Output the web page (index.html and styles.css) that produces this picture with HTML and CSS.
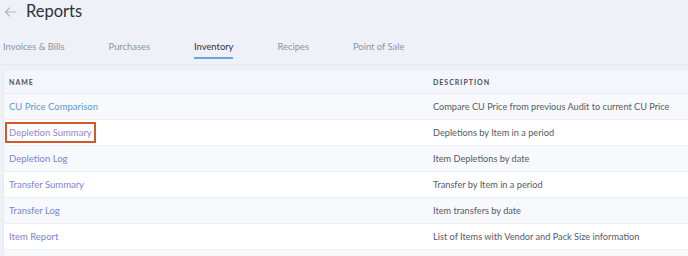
FILE: index.html
```html
<!DOCTYPE html>
<html>
<head>
<meta charset="utf-8">
<link rel="stylesheet" href="styles.css">
</head>
<body>
<header class="top">
  <svg class="back" width="13" height="10" viewBox="0 0 13 10"><path d="M12 5H1.5M5.5 1L1.5 5L5.5 9" fill="none" stroke="#b4b8c4" stroke-width="1.2" stroke-linecap="round" stroke-linejoin="round"/></svg>
  <h1 class="title">Reports</h1>
</header>
<nav class="tabs">
  <a class="tab">Invoices &amp; Bills</a>
  <a class="tab">Purchases</a>
  <a class="tab active">Inventory</a>
  <a class="tab">Recipes</a>
  <a class="tab">Point of Sale</a>
</nav>
<table class="reports">
  <thead>
    <tr><th class="col-name">NAME</th><th>DESCRIPTION</th></tr>
  </thead>
  <tbody>
    <tr><td><a class="link blue">CU Price Comparison</a></td><td>Compare CU Price from previous Audit to current CU Price</td></tr>
    <tr><td><a class="link boxed">Depletion Summary</a></td><td>Depletions by Item in a period</td></tr>
    <tr><td><a class="link">Depletion Log</a></td><td>Item Depletions by date</td></tr>
    <tr><td><a class="link">Transfer Summary</a></td><td>Transfer by Item in a period</td></tr>
    <tr><td><a class="link">Transfer Log</a></td><td>Item transfers by date</td></tr>
    <tr><td><a class="link">Item Report</a></td><td>List of Items with Vendor and Pack Size information</td></tr>
    <tr><td></td><td></td></tr>
  </tbody>
</table>
</body>
</html>
```
FILE: styles.css
```css
html, body {
  margin: 0;
  padding: 0;
  background: #eff1f8;
  font-family: Lato, "Open Sans", sans-serif;
  overflow: hidden;
}
.top {
  display: flex;
  align-items: center;
  height: 23px;
  padding-left: 4px;
}
.back { margin-right: 9px; }
.title {
  margin: 0;
  font-size: 16.5px;
  font-weight: 400;
  color: #2e323b;
  line-height: 23px;
}
.tabs {
  display: flex;
  gap: 44px;
  padding: 14px 0 0 3px;
  height: 27px;
  border-bottom: 1px solid #e6e9f2;
}
.tab {
  font-size: 9.4px;
  color: #8c94a6;
  line-height: 19px;
  height: 22px;
  box-sizing: border-box;
}
.tab.active {
  color: #30343d;
  border-bottom: 2px solid #6aa3d8;
}
.reports {
  margin: 6px 0 0 3px;
  border-collapse: collapse;
  width: 700px;
  border-left: 1px solid #e4e7ef;
}
.reports th {
  text-align: left;
  font-size: 7px;
  font-weight: 700;
  letter-spacing: 1px;
  color: #4a5161;
  background: #f5f6fb;
  height: 22px;
  padding: 0 0 0 5px;
  border-bottom: 1px solid #e6e9f0;
}
.reports th.col-name { width: 419px; }
.reports td {
  height: 25px;
  padding: 0 0 0 5px;
  font-size: 9.2px;
  color: #555b67;
  border-bottom: 1px solid #eceef4;
  background: #f8f9fc;
}
.reports tbody tr:nth-child(even) td { background: #ffffff; }
.link { color: #7b84cf; font-size: 9.5px; }
.link.blue { color: #5c98d8; }
.link.boxed {
  display: inline-block;
  margin-left: -4px;
  padding: 3px 2px;
  border: 2px solid #d4582a;
  color: #9584d6;
}
```
